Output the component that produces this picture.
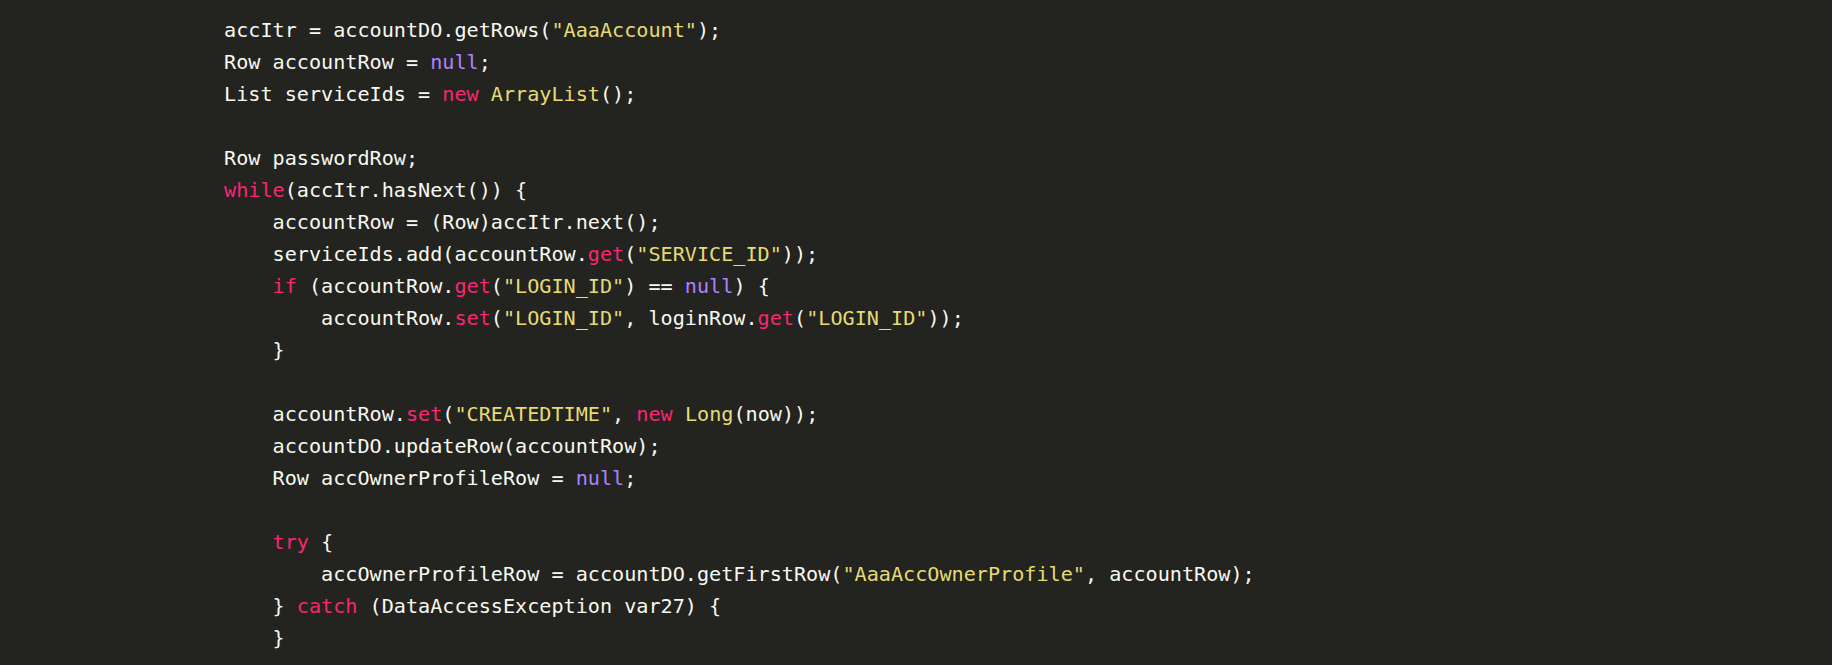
const K = ({ children }: { children: React.ReactNode }) => <span className="text-[#f92672]">{children}</span>;
const S = ({ children }: { children: React.ReactNode }) => <span className="text-[#e6db74]">{children}</span>;
const L = ({ children }: { children: React.ReactNode }) => <span className="text-[#ae81ff]">{children}</span>;

const lines: React.ReactNode[] = [
  <>accItr = accountDO.getRows(<S>"AaaAccount"</S>);</>,
  <>Row accountRow = <L>null</L>;</>,
  <>List serviceIds = <K>new</K> <S>ArrayList</S>();</>,
  <></>,
  <>Row passwordRow;</>,
  <><K>while</K>(accItr.hasNext()) {"{"}</>,
  <>{"    "}accountRow = (Row)accItr.next();</>,
  <>{"    "}serviceIds.add(accountRow.<K>get</K>(<S>"SERVICE_ID"</S>));</>,
  <>{"    "}<K>if</K> (accountRow.<K>get</K>(<S>"LOGIN_ID"</S>) == <L>null</L>) {"{"}</>,
  <>{"        "}accountRow.<K>set</K>(<S>"LOGIN_ID"</S>, loginRow.<K>get</K>(<S>"LOGIN_ID"</S>));</>,
  <>{"    }"}</>,
  <></>,
  <>{"    "}accountRow.<K>set</K>(<S>"CREATEDTIME"</S>, <K>new</K> <S>Long</S>(now));</>,
  <>{"    "}accountDO.updateRow(accountRow);</>,
  <>{"    "}Row accOwnerProfileRow = <L>null</L>;</>,
  <></>,
  <>{"    "}<K>try</K> {"{"}</>,
  <>{"        "}accOwnerProfileRow = accountDO.getFirstRow(<S>"AaaAccOwnerProfile"</S>, accountRow);</>,
  <>{"    } "}<K>catch</K> (DataAccessException var27) {"{"}</>,
  <>{"    }"}</>,
];

export default function App() {
  return (
    <div className="w-[1832px] h-[665px] overflow-hidden bg-[#23241f] text-[#f8f8f2]">
      <pre
        className="pl-[224px] pt-[14px] text-[20.15px] leading-[32px] whitespace-pre"
        style={{ fontFamily: '"DejaVu Sans Mono", "Liberation Mono", monospace' }}
      >
        {lines.map((l, i) => (
          <div key={i} className="h-[32px]">
            {l}
          </div>
        ))}
      </pre>
    </div>
  );
}
